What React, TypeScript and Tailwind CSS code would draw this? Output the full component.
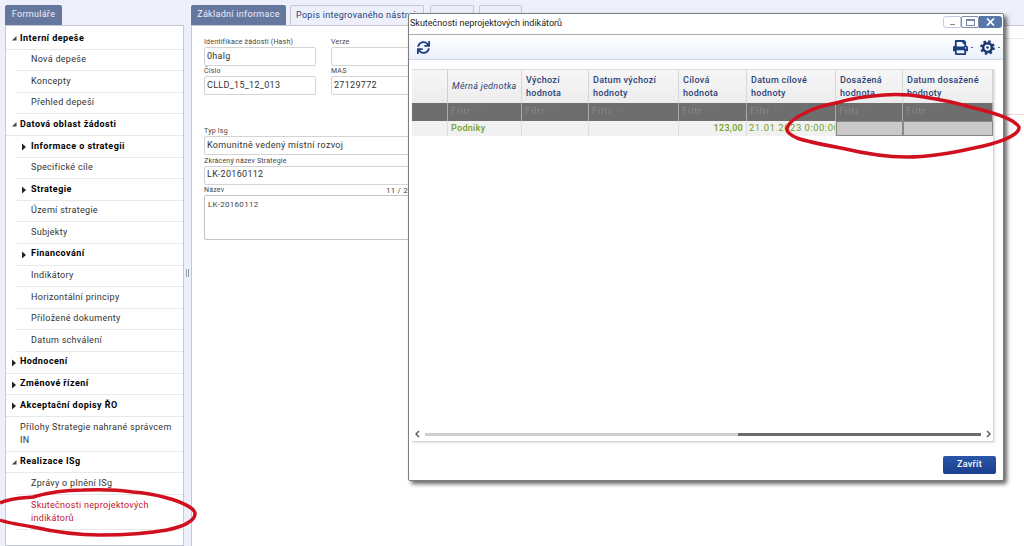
import { FaPrint, FaSync } from "react-icons/fa";

type MenuItem = { label: string; level: 0 | 1; bold?: boolean; arrow?: "open" | "closed"; red?: boolean; tall?: boolean };

const menu: MenuItem[] = [
  { label: "Interní depeše", level: 0, bold: true, arrow: "open" },
  { label: "Nová depeše", level: 1 },
  { label: "Koncepty", level: 1 },
  { label: "Přehled depeší", level: 1 },
  { label: "Datová oblast žádosti", level: 0, bold: true, arrow: "open" },
  { label: "Informace o strategii", level: 1, bold: true, arrow: "closed" },
  { label: "Specifické cíle", level: 1 },
  { label: "Strategie", level: 1, bold: true, arrow: "closed" },
  { label: "Území strategie", level: 1 },
  { label: "Subjekty", level: 1 },
  { label: "Financování", level: 1, bold: true, arrow: "closed" },
  { label: "Indikátory", level: 1 },
  { label: "Horizontální principy", level: 1 },
  { label: "Přiložené dokumenty", level: 1 },
  { label: "Datum schválení", level: 1 },
  { label: "Hodnocení", level: 0, bold: true, arrow: "closed" },
  { label: "Změnové řízení", level: 0, bold: true, arrow: "closed" },
  { label: "Akceptační dopisy ŘO", level: 0, bold: true, arrow: "closed" },
  { label: "Přílohy Strategie nahrané správcem IN", level: 0, tall: true },
  { label: "Realizace ISg", level: 0, bold: true, arrow: "open" },
  { label: "Zprávy o plnění ISg", level: 1 },
  { label: "Skutečnosti neprojektových indikátorů", level: 1, red: true, tall: true },
];

const columns = [
  { label: "Měrná jednotka", width: "w-[74px]", italic: true },
  { label: "Výchozí hodnota", width: "w-[67px]" },
  { label: "Datum výchozí hodnoty", width: "w-[90px]" },
  { label: "Cílová hodnota", width: "w-[68px]" },
  { label: "Datum cílové hodnoty", width: "w-[89px]" },
  { label: "Dosažená hodnota", width: "w-[67px]" },
  { label: "Datum dosažené hodnoty", width: "w-[90px]" },
];

function Arrow({ open }: { open: boolean }) {
  return open ? (
    <svg width="6" height="6" viewBox="0 0 6 6" className="shrink-0">
      <path d="M5.5 1v4.5H1z" fill="#444" />
    </svg>
  ) : (
    <svg width="6" height="8" viewBox="0 0 6 8" className="shrink-0">
      <path d="M1 0.5l4 3.5-4 3.5z" fill="#222" />
    </svg>
  );
}

function MenuRow({ item }: { item: MenuItem }) {
  return (
    <div className={item.level === 1 ? "pl-[11px]" : ""}>
      <div
        className={`relative flex items-center border-b border-[#e9e9e9] pl-[14px] pr-[8px] ${
          item.tall ? "h-[35px] leading-[12.5px]" : "h-[21.6px]"
        } ${item.bold ? "font-bold tracking-[0.45px] text-black" : "text-[#333]"} ${item.red ? "text-[#c8102e]" : ""}`}
      >
        {item.arrow && (
          <span className={`absolute top-[7px] ${item.level === 1 ? "left-[4px]" : "left-[5px]"}`}>
            <Arrow open={item.arrow === "open"} />
          </span>
        )}
        <span>{item.label}</span>
      </div>
    </div>
  );
}

function Field({ label, value, className }: { label: string; value?: string; className: string }) {
  return (
    <div className={className}>
      <div className="h-[9px] text-[7px] leading-[9px] tracking-[0.2px] text-[#444]">{label}</div>
      <div className="flex h-[19px] items-center rounded-[2px] border border-[#d4d4d4] bg-white px-[2px] text-[#333]">{value}</div>
    </div>
  );
}

export default function App() {
  return (
    <div className="relative h-[546px] w-[1024px] overflow-hidden bg-[#edf0fa] font-['Roboto',sans-serif] text-[9px] tracking-[0.3px]">
      <div className="flex h-full">
        {/* left form menu */}
        <div className="ml-[5px] flex w-[179px] shrink-0 flex-col pt-[5px]">
          <div className="flex h-[20px] w-[57px] items-center justify-center rounded-t-[2px] bg-[#66779f] text-[#edf0fa]">Formuláře</div>
          <div className="flex-1 border border-[#c5c8d0] bg-white pt-[2px]">
            {menu.map((item) => (
              <MenuRow key={item.label} item={item} />
            ))}
          </div>
        </div>

        <div className="flex w-[7px] shrink-0 items-center justify-center">
          <div className="h-[8px] w-[3px] border-x border-[#9a9fae]" />
        </div>

        {/* main form */}
        <div className="relative flex min-w-0 flex-1 flex-col pt-[5px]">
          <div className="flex h-[20px] items-end">
            <div className="flex h-[20px] w-[95px] items-center justify-center rounded-t-[2px] bg-[#66779f] text-[#edf0fa]">Základní informace</div>
            <div className="ml-[4px] flex h-[20px] w-[134px] items-center whitespace-nowrap rounded-t-[2px] border border-b-0 border-[#c5c8d0] pl-[5px] text-[#26407a]">Popis integrovaného nástroje</div>
            <div className="ml-[6px] h-[20px] w-[44px] rounded-t-[2px] border border-b-0 border-[#c5c8d0]" />
            <div className="ml-[5px] h-[20px] w-[43px] rounded-t-[2px] border border-b-0 border-[#c5c8d0]" />
          </div>
          <div className="relative flex-1 border-l border-t border-[#c5c8d0] bg-white pl-[12px] pt-[12px]">
            {/* faint rules that only show to the right of the dialog */}
            <div className="absolute left-[800px] right-0 top-[12px] h-px bg-[#ececec]" />
            <div className="absolute left-[800px] right-0 top-[88px] h-px bg-[#f3d9d9]" />
            <div className="flex gap-[15px]">
              <Field label="Identifikace žádosti (Hash)" value="0halg" className="w-[112px]" />
              <Field label="Verze" className="w-[120px]" />
            </div>
            <div className="mt-[1px] flex gap-[15px]">
              <Field label="Číslo" value="CLLD_15_12_013" className="w-[112px]" />
              <Field label="MAS" value="27129772" className="w-[120px]" />
            </div>
            <div className="mt-[32px] flex w-[247px] flex-col gap-[1.5px]">
              <Field label="Typ Isg" value="Komunitně vedený místní rozvoj" className="w-full" />
              <Field label="Zkrácený název Strategie" value="LK-20160112" className="w-full" />
              <div>
                <div className="flex h-[9px] justify-between text-[7px] leading-[9px] tracking-[0.2px] text-[#444]">
                  <span>Název</span>
                  <span className="pr-[43px] text-[8px]">11 / 2</span>
                </div>
                <div className="h-[45px] rounded-[2px] border border-[#c4c4c4] bg-white p-[3px] text-[8px] tracking-[0.3px] text-[#444]">LK-20160112</div>
              </div>
            </div>
          </div>
        </div>
      </div>

      {/* modal window */}
      <div className="absolute left-[408px] top-[13px] flex h-[468px] w-[596px] flex-col rounded-[2px] border border-[#7d7d7d] bg-white shadow-[3px_3px_4px_rgba(0,0,0,0.6)]">
        <div className="flex h-[20px] shrink-0 items-start justify-between pl-[1px] pr-[1px] pt-[2px]">
          <span className="mt-[1px] tracking-[0px] text-[#222]">Skutečnosti neprojektových indikátorů</span>
          <div className="flex h-[12px]">
            <div className="flex w-[18px] items-end justify-center rounded-l-[3px] border border-[#c3cde0] bg-white">
              <div className="mb-[2px] h-px w-[5px] bg-[#888]" />
            </div>
            <div className="flex w-[18px] items-center justify-center rounded-[2px] border border-[#7f8ba8] bg-white">
              <div className="h-[7px] w-[9px] border border-t-2 border-[#7a88a6]" />
            </div>
            <div className="flex w-[23px] items-center justify-center rounded-r-[3px] bg-[#5876a8]">
              <svg width="9" height="8" viewBox="0 0 9 8">
                <path d="M1 0.5l7 7M8 0.5l-7 7" stroke="#fff" strokeWidth="1.7" />
              </svg>
            </div>
          </div>
        </div>
        <div className="flex h-[26px] shrink-0 items-center justify-between border-y border-b-[#d3d9e4] border-t-[#a9a9a9] bg-gradient-to-b from-white to-[#eaf0fa] pl-[8px] pr-[3px]">
          <FaSync size={13} color="#1b3f82" />
          <div className="flex items-center gap-[3px]">
            <FaPrint size={15} color="#1b3f82" />
            <div className="h-px w-[2px] bg-[#5a6a8a]" />
            <svg width="15" height="15" viewBox="0 0 24 24" className="ml-[4px]">
              <circle cx="12" cy="12" r="7" fill="none" stroke="#17376f" strokeWidth="4" />
              <circle cx="12" cy="12" r="10" fill="none" stroke="#17376f" strokeWidth="3.5" strokeDasharray="4 3.85" />
              <circle cx="12" cy="12" r="2" fill="#17376f" />
            </svg>
            <div className="h-px w-[2px] bg-[#5a6a8a]" />
          </div>
        </div>

        <div className="mx-[3px] mt-[9px] flex h-[373px] w-[582px] flex-col border-b border-r border-[#d4d4d4] shadow-[1px_1px_2px_rgba(0,0,0,0.12)]">
          {/* header */}
          <div className="flex h-[34px] shrink-0 border-t border-[#dcdcdc] bg-gradient-to-b from-[#f7f7f7] to-[#ececec]">
            <div className="w-[36px] shrink-0 border-r border-[#cfcfcf]" />
            {columns.map((c) => (
              <div
                key={c.label}
                className={`${c.width} shrink-0 overflow-hidden border-r border-[#d6d6d6] pl-[4px] leading-[13px] ${c.italic ? "flex items-center italic text-[#2b4378]" : "pt-[4px] font-medium text-[#2c3f77]"}`}
              >
                {c.label}
              </div>
            ))}
          </div>
          {/* filter row */}
          <div className="flex h-[18px] shrink-0 bg-[#6e6e6e] tracking-[1px] text-[#8a8a8a]">
            <div className="w-[36px] shrink-0 border-r border-[#aaa]" />
            {columns.map((c) => (
              <div key={c.label} className={`${c.width} flex shrink-0 items-center overflow-hidden whitespace-nowrap border-r border-[#aaa] pl-[3px]`}>
                Filtr ···
              </div>
            ))}
          </div>
          {/* data row */}
          <div className="flex h-[15px] shrink-0 bg-[#f1f1f1] leading-[14px] text-[#74a024]">
            <div className="w-[36px] shrink-0 border-r border-[#ddd]" />
            <div className="w-[74px] shrink-0 border-r border-[#ddd] pl-[3px] font-medium">Podniky</div>
            <div className="w-[67px] shrink-0 border-r border-[#ddd]" />
            <div className="w-[90px] shrink-0 border-r border-[#ddd]" />
            <div className="w-[68px] shrink-0 border-r border-[#ddd] pr-[3px] text-right font-medium">123,00</div>
            <div className="w-[89px] shrink-0 overflow-hidden whitespace-nowrap border-r border-[#ddd] pl-[2px] text-[9.5px] tracking-[0.5px]">21.01.2023 0:00:00</div>
            <div className="w-[67px] shrink-0 border border-[#888] bg-[#cacaca]" />
            <div className="w-[90px] shrink-0 border border-[#888] bg-[#cacaca]" />
          </div>
          <div className="flex-1" />
          {/* horizontal scroller */}
          <div className="mb-[3px] flex h-[8px] items-center gap-[5px] pl-[3px]">
            <svg width="5" height="8" viewBox="0 0 5 8">
              <path d="M4 1L1 4l3 3" fill="none" stroke="#555" strokeWidth="1.4" />
            </svg>
            <div className="flex h-[3px] w-[556px] bg-[#cfcfcf]">
              <div className="ml-[313px] h-full flex-1 bg-[#6c6c6c]" />
            </div>
            <svg width="5" height="8" viewBox="0 0 5 8">
              <path d="M1 1l3 3-3 3" fill="none" stroke="#555" strokeWidth="1.4" />
            </svg>
          </div>
        </div>

        <div className="flex flex-1 items-start justify-end pr-[7px] pt-[14px]">
          <div className="flex h-[18px] w-[53px] items-center justify-center rounded-[2px] bg-gradient-to-b from-[#2a56a8] to-[#1a3f8c] font-medium text-white">Zavřít</div>
        </div>
      </div>

      {/* red hand-drawn annotations */}
      <svg width="1024" height="546" viewBox="0 0 1024 546" className="pointer-events-none absolute left-0 top-0">
        <path
          d="M0 503C10 498 22 498 33 497C50 492 65 490 83 490C105 489 120 490 133 492C150 493 160 496 167 498C182 502 194 508 195 513C196 521 182 527 167 530C145 534 122 535 100 535C75 535 55 532 33 527C15 524 5 522 0 520"
          fill="none"
          stroke="#d0101f"
          strokeWidth="3.5"
        />
        <path
          d="M836 103C852 98 868 96 884 95C898 94 912 95 924 97C945 100 960 104 974 108C995 113 1015 120 1019 127C1020 136 995 144 974 148C952 153 930 157 907 157C885 157 862 153 841 148C825 145 808 142 797 138C790 135 786 132 787 128C789 122 798 116 807 112C815 108 825 105 836 103Z"
          fill="none"
          stroke="#d0101f"
          strokeWidth="3.5"
        />
      </svg>
    </div>
  );
}
